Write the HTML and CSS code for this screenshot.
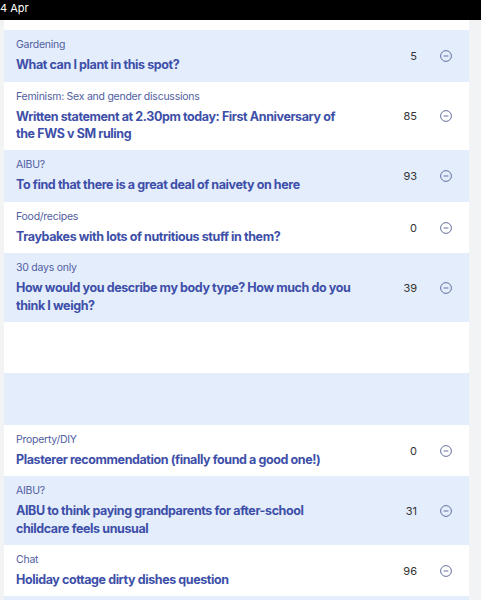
FILE: index.html
```html
<!DOCTYPE html>
<html>
<head>
<meta charset="utf-8">
<link rel="stylesheet" href="styles.css">
</head>
<body>
<div class="topbar">4 Apr</div>
<div class="list">
  <div class="spacer"></div>
  <div class="row alt">
    <div class="text"><div class="cat">Gardening</div><div class="title">What can I plant in this spot?</div></div>
    <div class="count">5</div>
    <div class="icon"><svg width="12" height="12" viewBox="0 0 12 12"><circle cx="6" cy="6" r="5.4" fill="none" stroke="#66719f" stroke-width="1"/><line x1="3.6" y1="6" x2="8.4" y2="6" stroke="#66719f" stroke-width="1"/></svg></div>
  </div>
  <div class="row">
    <div class="text"><div class="cat">Feminism: Sex and gender discussions</div><div class="title">Written statement at 2.30pm today: First Anniversary of<br>the FWS v SM ruling</div></div>
    <div class="count">85</div>
    <div class="icon"><svg width="12" height="12" viewBox="0 0 12 12"><circle cx="6" cy="6" r="5.4" fill="none" stroke="#66719f" stroke-width="1"/><line x1="3.6" y1="6" x2="8.4" y2="6" stroke="#66719f" stroke-width="1"/></svg></div>
  </div>
  <div class="row alt">
    <div class="text"><div class="cat">AIBU?</div><div class="title">To find that there is a great deal of naivety on here</div></div>
    <div class="count">93</div>
    <div class="icon"><svg width="12" height="12" viewBox="0 0 12 12"><circle cx="6" cy="6" r="5.4" fill="none" stroke="#66719f" stroke-width="1"/><line x1="3.6" y1="6" x2="8.4" y2="6" stroke="#66719f" stroke-width="1"/></svg></div>
  </div>
  <div class="row">
    <div class="text"><div class="cat">Food/recipes</div><div class="title">Traybakes with lots of nutritious stuff in them?</div></div>
    <div class="count">0</div>
    <div class="icon"><svg width="12" height="12" viewBox="0 0 12 12"><circle cx="6" cy="6" r="5.4" fill="none" stroke="#66719f" stroke-width="1"/><line x1="3.6" y1="6" x2="8.4" y2="6" stroke="#66719f" stroke-width="1"/></svg></div>
  </div>
  <div class="row alt">
    <div class="text"><div class="cat">30 days only</div><div class="title">How would you describe my body type? How much do you<br>think I weigh?</div></div>
    <div class="count">39</div>
    <div class="icon"><svg width="12" height="12" viewBox="0 0 12 12"><circle cx="6" cy="6" r="5.4" fill="none" stroke="#66719f" stroke-width="1"/><line x1="3.6" y1="6" x2="8.4" y2="6" stroke="#66719f" stroke-width="1"/></svg></div>
  </div>
  <div class="row empty"></div>
  <div class="row alt empty"></div>
  <div class="row">
    <div class="text"><div class="cat">Property/DIY</div><div class="title">Plasterer recommendation (finally found a good one!)</div></div>
    <div class="count">0</div>
    <div class="icon"><svg width="12" height="12" viewBox="0 0 12 12"><circle cx="6" cy="6" r="5.4" fill="none" stroke="#66719f" stroke-width="1"/><line x1="3.6" y1="6" x2="8.4" y2="6" stroke="#66719f" stroke-width="1"/></svg></div>
  </div>
  <div class="row alt">
    <div class="text"><div class="cat">AIBU?</div><div class="title">AIBU to think paying grandparents for after-school<br>childcare feels unusual</div></div>
    <div class="count">31</div>
    <div class="icon"><svg width="12" height="12" viewBox="0 0 12 12"><circle cx="6" cy="6" r="5.4" fill="none" stroke="#66719f" stroke-width="1"/><line x1="3.6" y1="6" x2="8.4" y2="6" stroke="#66719f" stroke-width="1"/></svg></div>
  </div>
  <div class="row">
    <div class="text"><div class="cat">Chat</div><div class="title">Holiday cottage dirty dishes question</div></div>
    <div class="count">96</div>
    <div class="icon"><svg width="12" height="12" viewBox="0 0 12 12"><circle cx="6" cy="6" r="5.4" fill="none" stroke="#66719f" stroke-width="1"/><line x1="3.6" y1="6" x2="8.4" y2="6" stroke="#66719f" stroke-width="1"/></svg></div>
  </div>
  <div class="row alt tail"></div>
</div>
</body>
</html>
```

FILE: styles.css
```css
html, body {
  margin: 0;
  padding: 0;
}
body {
  background: #f2f3f5;
  font-family: Inter, "Noto Sans", sans-serif;
  width: 481px;
  height: 600px;
  overflow: hidden;
}
.topbar {
  height: 20px;
  background: #000;
  color: #fff;
  font-size: 11px;
  line-height: 17px;
  box-sizing: border-box;
}
.list {
  margin-left: 4px;
  width: 465px;
}
.spacer {
  height: 10px;
  background: #fff;
}
.row {
  display: flex;
  align-items: center;
  background: #fff;
  padding: 8px 0 7.5px 12px;
  box-sizing: border-box;
  min-height: 51.5px;
}
.row.alt {
  background: #e4edfc;
}
.row.tail {
  min-height: 10px;
  padding: 0;
}
.text {
  flex: 1;
  max-width: 355px;
  padding-right: 10px;
}
.cat {
  font-size: 10.5px;
  line-height: 14px;
  color: #5160a2;
  letter-spacing: -0.25px;
  margin-bottom: 4px;
}
.title {
  font-size: 12.5px;
  line-height: 17.5px;
  font-weight: 700;
  color: #3d4fa8;
  letter-spacing: -0.4px;
  white-space: nowrap;
}
.count {
  margin-left: auto;
  margin-right: 6px;
  width: 40px;
  text-align: right;
  font-size: 11px;
  color: #333;
}
.icon {
  width: 46px;
  display: flex;
  justify-content: center;
}
.icon svg {
  display: block;
}
```
